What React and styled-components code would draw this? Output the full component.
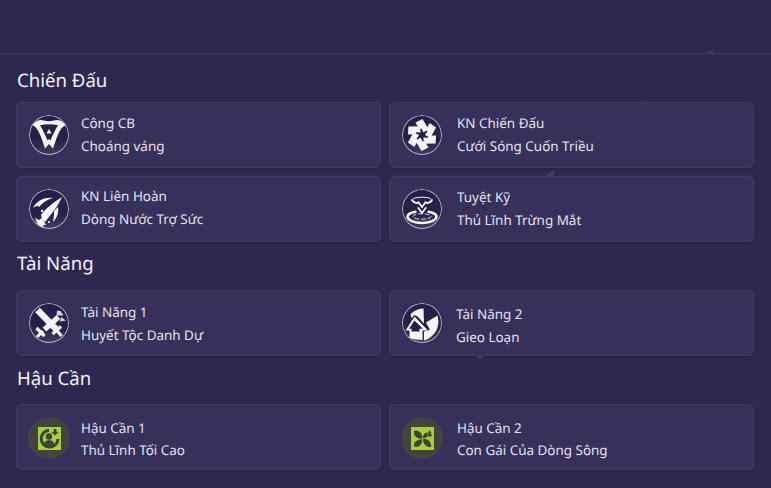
import React from 'react'
import styled, { createGlobalStyle } from 'styled-components'

const GlobalStyle = createGlobalStyle`
  html, body {
    margin: 0;
    padding: 0;
    height: 100%;
    background: #2e2850;
    overflow: hidden;
  }
`

const Page = styled.div`
  position: relative;
  width: 771px;
  height: 488px;
  font-family: 'Noto Sans', sans-serif;
  text-rendering: geometricPrecision;
  color: #e6e4ee;
  overflow: hidden;
`

const TopBar = styled.div`
  height: 53px;
  border-bottom: 1px solid #423b66;
`

const Content = styled.div`
  padding: 13px 17px 0 16px;
`

const SectionTitle = styled.h2`
  margin: 0 0 ${({ $after }) => $after}px 1px;
  height: 27px;
  font-size: 18.6px;
  line-height: 27px;
  font-weight: 400;
  color: #f2f1f6;
`

const Section = styled.section`
  margin-bottom: ${({ $gap }) => $gap}px;
`

const Grid = styled.div`
  display: grid;
  grid-template-columns: 365px 365px;
  column-gap: 8px;
  row-gap: 8px;
`

const Card = styled.div`
  height: 66px;
  box-sizing: border-box;
  display: flex;
  align-items: flex-start;
  padding: 12px 0 0 12px;
  background: #37305a;
  border: 1px solid #423b66;
  border-radius: 5px;
  box-shadow: 0 1px 2px rgba(20, 16, 44, 0.35);
`

const Badge = styled.div`
  flex: none;
  width: 40px;
  height: 40px;
  border-radius: 50%;
  overflow: hidden;
  background: linear-gradient(180deg, #231f49 0%, #262149 62%, #423e60 100%);
  position: relative;
  svg {
    display: block;
  }
  &::after {
    content: '';
    position: absolute;
    inset: 0;
    border-radius: 50%;
    box-shadow: inset 0 0 0 1px #b7b4c2;
  }
`

const PassiveBadge = styled.div`
  flex: none;
  width: 42px;
  height: 42px;
  margin: 0 -1px;
  border-radius: 50%;
  background: #43443f;
  display: flex;
  align-items: center;
  justify-content: center;
`

const PassiveSquare = styled.div`
  width: 23px;
  height: 23px;
  background: #a3d139;
  svg {
    display: block;
  }
`

const TextBlock = styled.div`
  margin-left: ${({ $gap }) => $gap ?? 12}px;
  margin-top: ${({ $top }) => $top ?? -3}px;
  font-size: 13.45px;
  line-height: ${({ $lead }) => $lead || 23}px;
  color: #e4e2ec;
`

const Line = styled.div`
  white-space: nowrap;
`

const Specks = styled.svg`
  position: absolute;
  left: 0;
  top: 0;
  pointer-events: none;
`

const Svg = ({ children }) => (
  <svg width="40" height="40" viewBox="0 0 40 40" fill="#f4f3f6">
    {children}
  </svg>
)

const ShieldIcon = () => (
  <Svg>
    <path d="M6 7.5 C9 4.5 12 4.5 15 5.5 C18 6.5 22 6.5 25 5.5 C28 4.5 31 4.5 34 7.5 C35.5 8.5 36.5 9.5 36 10.5 C33 12 31.5 14.5 29.5 18.5 C27 24 25.5 29 24 33.5 L20 29 L16 33.5 C14.5 29 13 24 10.5 18.5 C8.5 14.5 7 12 4 10.5 C3.5 9.5 4.5 8.5 6 7.5 Z" />
    <path d="M11 10.3 C14 9.5 17 9.2 20 9.2 C23 9.2 26 9.5 29 10.3 C26.5 14 24.5 19 21.3 25.5 L20 24 L18.7 25.5 C15.5 19 13.5 14 11 10.3 Z" fill="#27224c" />
    <path d="M20 14 L22.6 18.5 H17.4 Z" />
  </Svg>
)

const PinwheelIcon = () => (
  <Svg>
    {[0, 60, 120, 180, 240, 300].map((a) => (
      <path key={a} transform={`rotate(${a} 20 20)`} d="M13.5 7.5 L20.5 4 L26.5 14 L21.5 17.5 L19.5 13.5 L17.5 14 Z" />
    ))}
  </Svg>
)

const RocketIcon = () => (
  <Svg>
    <path d="M33 8 C30 15 25 22 20 28 L16 33 L13 30 L12 26 C16 20 25 13 33 8 Z" />
    <path d="M4 19 C7 13 14 8 24 9 C19 10 14 13 10 18 C9 16 6 17 4 19 Z" />
    <path d="M29 18 C30 24 28 29 24 33 C25 28 25 25 25 22 Z" />
    <circle cx="13" cy="22" r="1.2" />
    <circle cx="20" cy="33" r="1.1" />
    <path d="M6 29 L10 31 L13 29 L17 36 L14 36 L15 39 L10 37 L8 34 Z" />
  </Svg>
)

const RingsIcon = () => (
  <Svg>
    <g fill="none" stroke="#f4f3f6" strokeLinecap="round">
      <path d="M11 10 C12 7.5 28 7.5 29 10" strokeWidth="1" />
      <path d="M10 11 C11 13 14 14 16 14.2 M24 14.2 C26 14 29 13 30 11" strokeWidth="1.8" />
      <path d="M16.3 13 L20 18 L23.7 13" strokeWidth="1.8" />
      <path d="M16.3 19 L20 24 L23.7 19" strokeWidth="1.8" />
      <path d="M5.5 27.5 C5.5 31 12 34 20 34 C28 34 34.5 31 34.5 27.5 C34.5 25.5 31 23.5 26.5 22.8 M13.5 22.8 C9 23.5 5.5 25.5 5.5 27.5" strokeWidth="2.6" />
      <ellipse cx="20" cy="27.5" rx="9" ry="2.8" strokeWidth="0.9" strokeDasharray="4 2.5" />
    </g>
  </Svg>
)

const SwordsIcon = () => (
  <Svg>
    <g fill="none" stroke="#f4f3f6" strokeLinecap="butt">
      <path d="M8.5 7 L27 26" strokeWidth="6.5" />
      <path d="M27 26.5 L32.5 33" strokeWidth="3" />
      <path d="M23.5 31 L32 23.5" strokeWidth="3.2" />
      <path d="M29.5 14 L15.5 26.5" strokeWidth="5.5" />
      <path d="M14 28 L8 34" strokeWidth="3" />
      <path d="M7.5 25 L15.5 33" strokeWidth="3.2" />
    </g>
    <path d="M28 7.5 L31.5 8 L34.5 12.5 L27.5 12.5 Z" fill="#d6d4de" />
    <path d="M32 14 L37 17.5 L31 18.5 Z" fill="#d6d4de" />
  </Svg>
)

const ArrowPieIcon = () => (
  <Svg>
    <path d="M8.5 11 C12 7.5 17 5.5 21.5 5.5 L22 20.5 L15.5 13.5 L12.5 12 L9.5 15 Z" />
    <path d="M24 19.5 L35.5 12.5 C37.5 20 36 27 31 32 C28 35 25 36.5 22 37.5 L22 28.5 L28 27 Z" />
    <path d="M12.5 13.5 L26 27.5 H20.5 V37 C16 37 11 36 7.5 35 V27.5 H3.5 Z" />
    <path d="M12.5 17.5 L21 25.7 H17.5 V28.5 H9.5 V25.7 H7 Z" fill="#27224c" />
  </Svg>
)

const LeaderIcon = () => (
  <svg width="23" height="23" viewBox="0 0 23 23" fill="#3f4238">
    <path d="M11 3.2 A8.4 8.4 0 1 0 20 12" fill="none" stroke="#3f4238" strokeWidth="3" />
    <circle cx="11" cy="9.5" r="3.2" />
    <path d="M6 18 C6 14 8.5 13.2 11 13.2 C13.5 13.2 16 14 16 18 C14.5 19.5 7.5 19.5 6 18 Z" />
    <path d="M15.5 2 H18.5 V5 H20.5 L17 8.5 L13.5 5 H15.5 Z" />
  </svg>
)

const FlowerIcon = () => (
  <svg width="23" height="23" viewBox="0 0 23 23" fill="#3f4238">
    <path d="M3 4 C7 3 11.5 5 11.4 11.4 C7 12 2.5 10 3 4 Z" />
    <path d="M16.5 5.5 C17.5 8.5 16 11.2 12 11.4 C11.8 8.5 13 6 16.5 5.5 Z" />
    <path d="M3 19.5 C2.5 15 6.5 12 11.2 12.2 C11.8 16.5 8.5 21 3 19.5 Z" />
    <path d="M12 12.2 C16.5 11.2 20.5 14.5 20 20 C15.5 20.5 11.8 17 12 12.2 Z" />
    <path d="M18.5 3 L20.5 6 H19.7 L21 9.5 H16.5 L17.8 6 H17 Z" />
  </svg>
)

const skills = [
  {
    title: 'Chiến Đấu',
    after: 8,
    gap: 8,
    items: [
      { icon: <ShieldIcon />, name: 'Công CB', value: 'Choáng váng' },
      { icon: <PinwheelIcon />, name: 'KN Chiến Đấu', value: 'Cưới Sóng Cuốn Triều', gapText: 15 },
      { icon: <RocketIcon />, name: 'KN Liên Hoàn', value: 'Dòng Nước Trợ Sức', top: -4 },
      { icon: <RingsIcon />, name: 'Tuyệt Kỹ', value: 'Thủ Lĩnh Trừng Mắt', gapText: 15 },
    ],
  },
  {
    title: 'Tài Năng',
    after: 13,
    gap: 9,
    items: [
      { icon: <SwordsIcon />, name: 'Tài Năng 1', value: 'Huyết Tộc Danh Dự', top: -2 },
      { icon: <ArrowPieIcon />, name: 'Tài Năng 2', value: 'Gieo Loạn', top: 0, gapText: 14 },
    ],
  },
  {
    title: 'Hậu Cần',
    after: 12,
    gap: 0,
    items: [
      { passive: <LeaderIcon />, name: 'Hậu Cần 1', value: 'Thủ Lĩnh Tối Cao', top: 0, lead: 22 },
      { passive: <FlowerIcon />, name: 'Hậu Cần 2', value: 'Con Gái Của Dòng Sông', top: 0, lead: 22, gapText: 15 },
    ],
  },
]

export default function App() {
  return (
    <Page>
      <GlobalStyle />
      <TopBar />
      <Content>
        {skills.map((section) => (
          <Section key={section.title} $gap={section.gap}>
            <SectionTitle $after={section.after}>{section.title}</SectionTitle>
            <Grid>
              {section.items.map((item) => (
                <Card key={item.name}>
                  {item.passive ? (
                    <PassiveBadge>
                      <PassiveSquare>{item.passive}</PassiveSquare>
                    </PassiveBadge>
                  ) : (
                    <Badge>{item.icon}</Badge>
                  )}
                  <TextBlock $top={item.top} $gap={item.gapText} $lead={item.lead}>
                    <Line>{item.name}</Line>
                    <Line>{item.value}</Line>
                  </TextBlock>
                </Card>
              ))}
            </Grid>
          </Section>
        ))}
      </Content>
      <Specks width="771" height="488" fill="#423b66">
        <path d="M705 52 L714 49 L712 53 Z" />
        <path d="M642 103 L648 100 L646 103 Z" />
        <path d="M545 176 L555 169 L553 176 Z" />
        <path d="M477 356 H484 L480 359 Z" />
      </Specks>
    </Page>
  )
}
